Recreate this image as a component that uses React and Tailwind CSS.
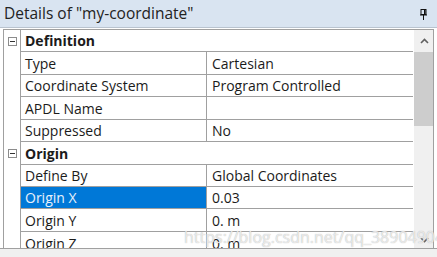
import React from 'react';

const rows = [
  { cat: true, label: 'Definition', h: 'h-[22px]' },
  { label: 'Type', value: 'Cartesian', h: 'h-[23px]' },
  { label: 'Coordinate System', value: 'Program Controlled', h: 'h-[22px]' },
  { label: 'APDL Name', value: '', h: 'h-[23px]' },
  { label: 'Suppressed', value: 'No', h: 'h-[22px]' },
  { cat: true, label: 'Origin', h: 'h-[23px]' },
  { label: 'Define By', value: 'Global Coordinates', h: 'h-[22px]' },
  { label: 'Origin X', value: '0.03', h: 'h-[22px]', selected: true },
  { label: 'Origin Y', value: '0. m', h: 'h-[23px]' },
  { label: 'Origin Z', value: '0. m', h: 'h-[23px]' },
];

function MinusBox() {
  return (
    <div className="w-[9px] h-[9px] border border-[#8c8c8c] bg-white flex items-center justify-center">
      <div className="w-[5px] h-px bg-[#333]" />
    </div>
  );
}

export default function App() {
  return (
    <div
      className="w-[437px] h-[257px] bg-white overflow-hidden relative text-[#1b1b1b]"
      style={{ fontFamily: '"Open Sans", "Noto Sans", sans-serif' }}
    >
      {/* Title bar */}
      <div className="h-[28px] bg-[#d9e4f1] border-b border-[#b9c3cf] flex items-center justify-between pl-[4px] pr-[10px]">
        <span className="text-[15.5px] leading-none text-[#222]">Details of "my-coordinate"</span>
        <svg width="7" height="11" viewBox="0 0 7 11" className="mt-[1px]">
          <rect x="1" y="0.5" width="5" height="5" fill="none" stroke="#111" />
          <rect x="4" y="1" width="1.5" height="4.5" fill="#111" />
          <rect x="0" y="5.5" width="7" height="1" fill="#111" />
          <rect x="3" y="6" width="1" height="5" fill="#111" />
        </svg>
      </div>

      {/* Property grid */}
      <div className="mt-[1px] ml-[3px] mr-[3px] h-[219px] border-l border-r border-t border-[#a0a0a0] flex overflow-hidden">
        <div className="w-[16px] shrink-0 flex flex-col">
          {rows.map((r, i) => (
            <div key={i} className={`${r.h} shrink-0 flex items-center justify-center`}>
              {r.cat && <MinusBox />}
            </div>
          ))}
        </div>
        <div className="w-[393px] shrink-0 border-l border-[#a0a0a0] flex flex-col">
          {rows.map((r, i) =>
            r.cat ? (
              <div key={i} className={`${r.h} shrink-0 border-b border-[#a0a0a0] flex items-center pl-[4px] text-[14px] font-bold`}>
                {r.label}
              </div>
            ) : (
              <div key={i} className={`${r.h} shrink-0 border-b border-[#a0a0a0] flex text-[14px]`}>
                <div
                  className={`w-[186px] shrink-0 border-r border-[#a0a0a0] flex items-center pl-[4px] ${
                    r.selected ? 'bg-[#0078d7] text-[#e8f1fb]' : ''
                  }`}
                >
                  {r.label}
                </div>
                <div className="flex-1 flex items-center pl-[5px]">{r.value}</div>
              </div>
            )
          )}
        </div>
        <div className="w-[20px] shrink-0 ml-[1px] bg-[#f0f0f0] flex flex-col">
          <div className="h-[22px] flex items-center justify-center">
            <svg width="9" height="6" viewBox="0 0 9 6">
              <path d="M1 5 L4.5 1.5 L8 5" fill="none" stroke="#606060" strokeWidth="1.6" />
            </svg>
          </div>
          <div className="h-[74px] bg-[#cdcdcd]" />
          <div className="flex-1" />
          <div className="h-[16px] flex items-center justify-center">
            <svg width="9" height="6" viewBox="0 0 9 6">
              <path d="M1 1 L4.5 4.5 L8 1" fill="none" stroke="#606060" strokeWidth="1.6" />
            </svg>
          </div>
        </div>
      </div>

      {/* Bottom strip */}
      <div className="h-[9px] bg-[#f0f0f0] border-t border-[#a0a0a0]" />

      {/* Watermark */}
      <div
        className="absolute left-[184px] top-[229px] whitespace-nowrap text-[16px] leading-none text-white/70"
        style={{ textShadow: '0 0 1px #a8a8a8' }}
      >
        https://blog.csdn.net/qq_38904904
      </div>
    </div>
  );
}
